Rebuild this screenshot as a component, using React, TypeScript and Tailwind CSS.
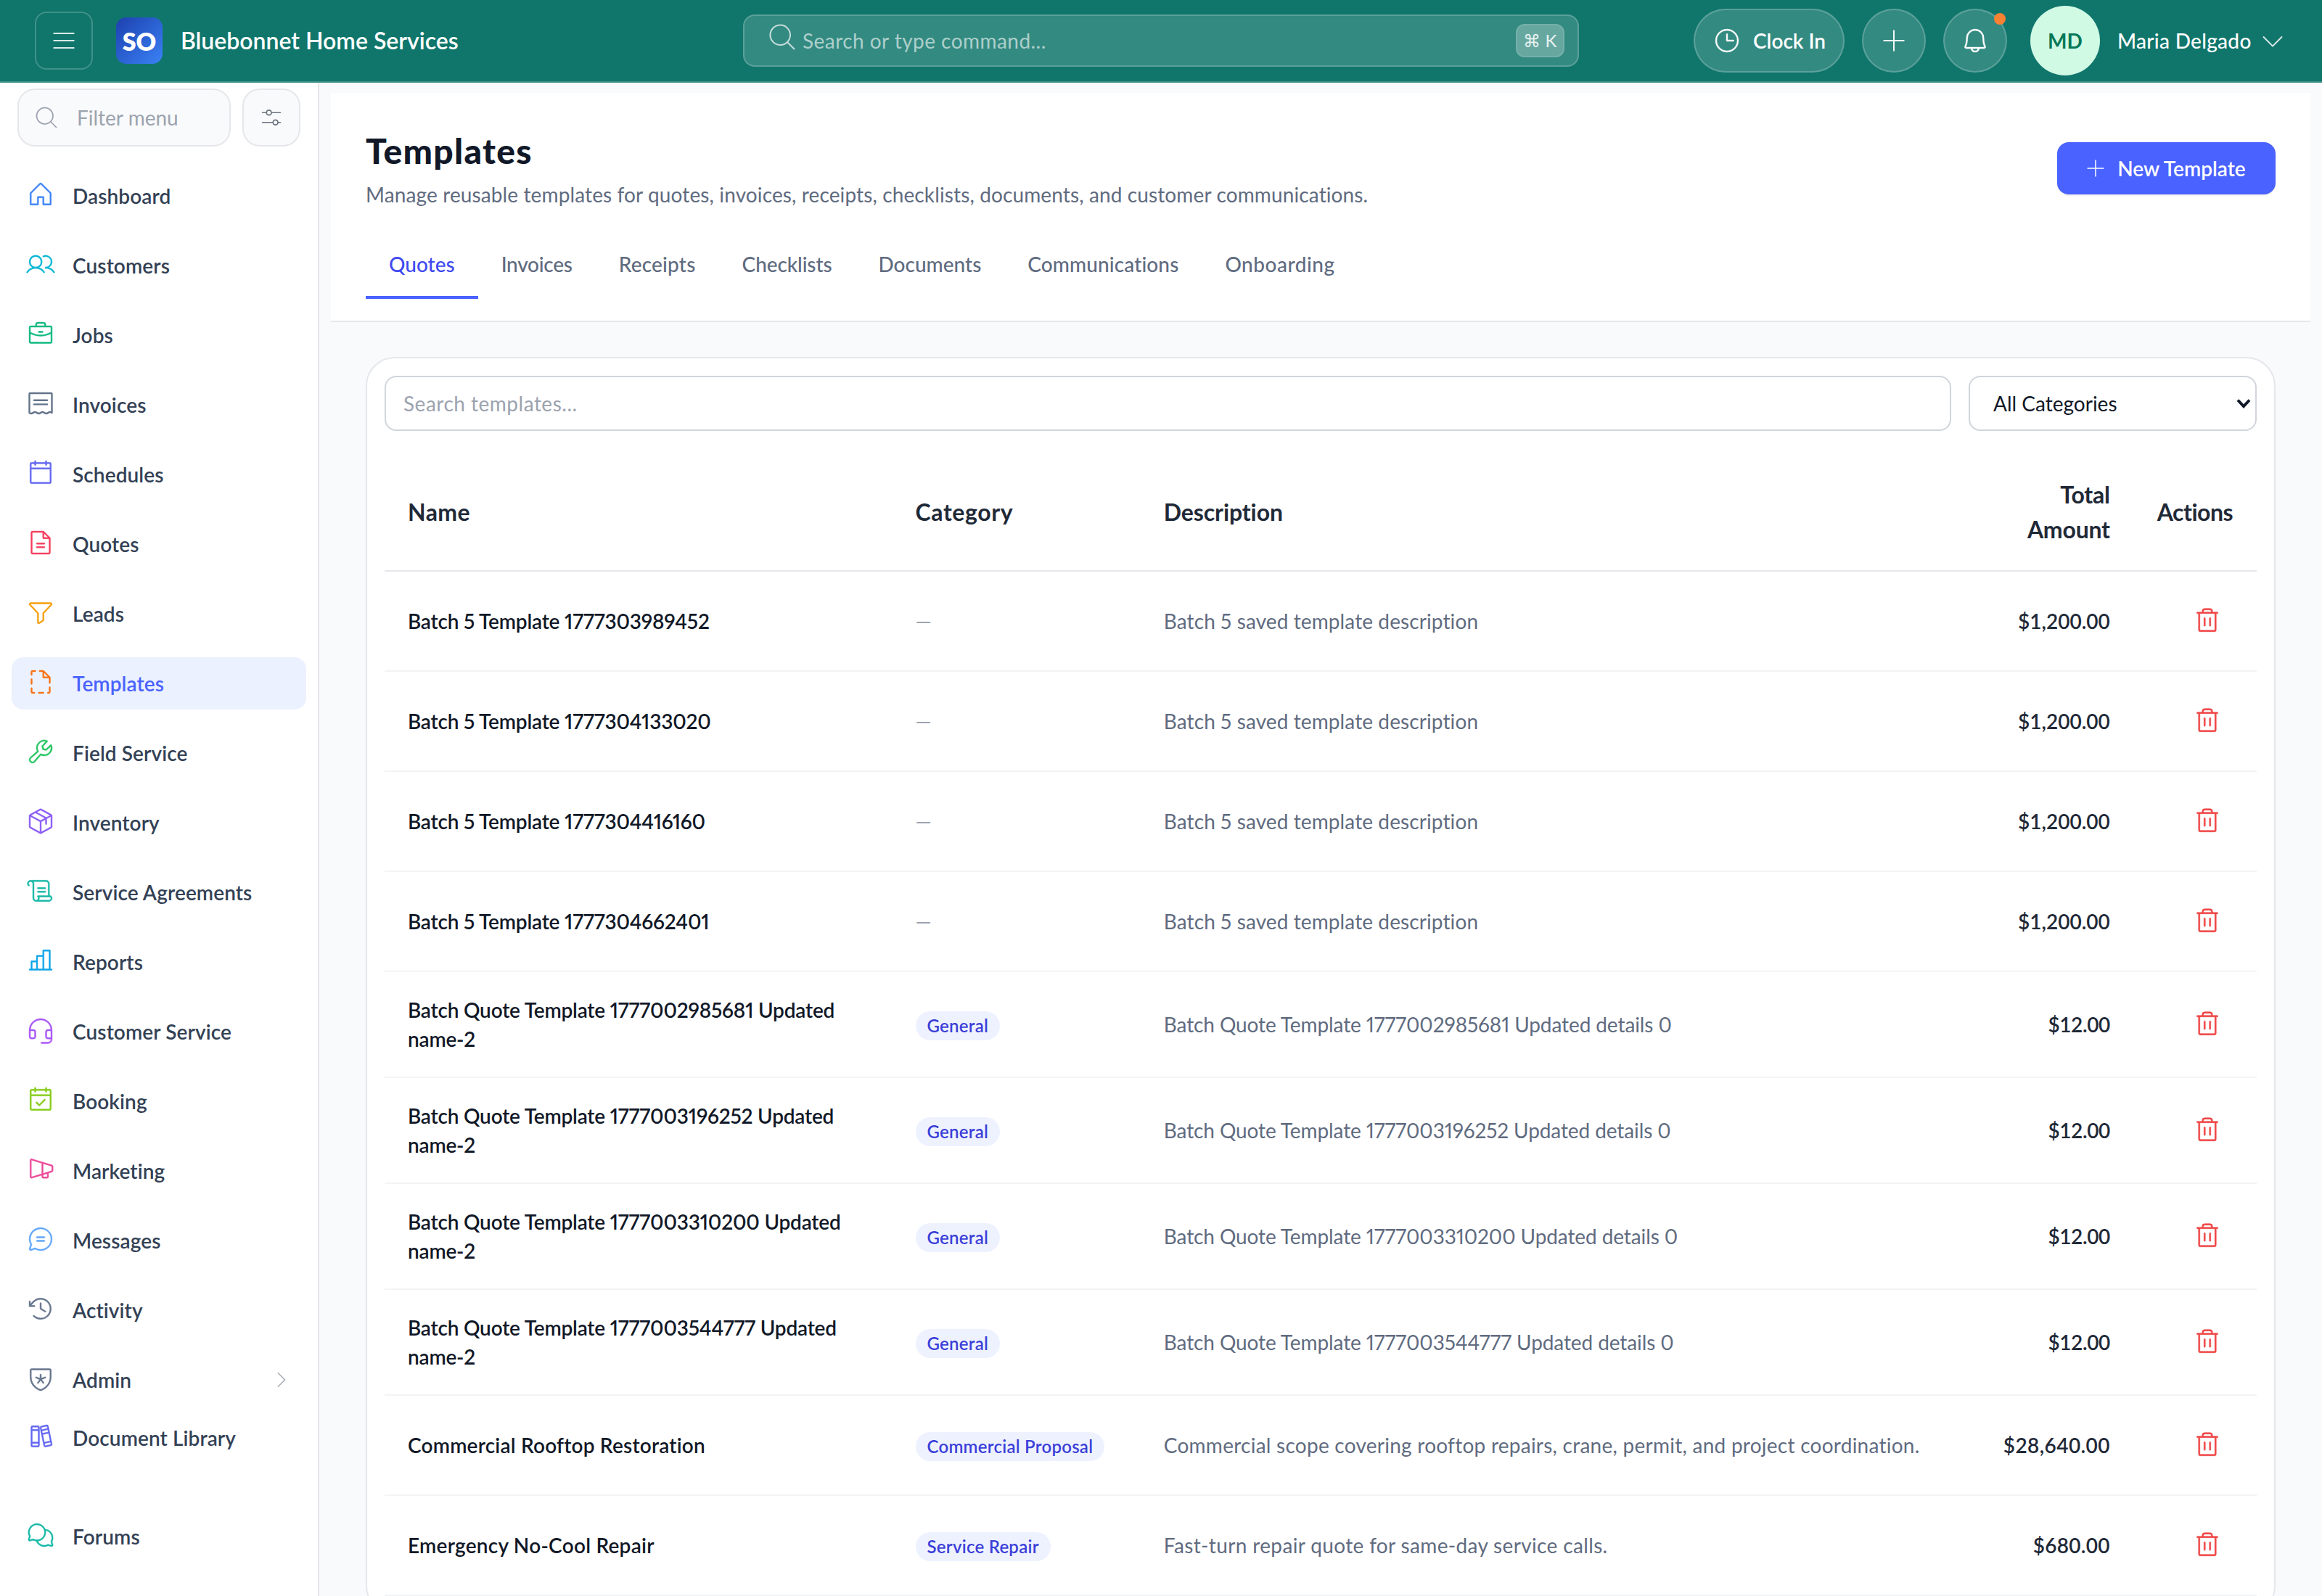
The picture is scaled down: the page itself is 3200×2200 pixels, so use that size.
import React from "react";
import {
  PiHouseLight, PiUsersLight, PiBriefcaseLight, PiCalendarBlankLight, PiFileTextLight,
  PiFunnelLight, PiFileDashedLight, PiWrenchLight, PiPackageLight, PiScrollLight, PiChartBarLight,
  PiHeadsetLight, PiCalendarCheckLight, PiMegaphoneSimpleLight, PiChatCircleTextLight,
  PiClockCounterClockwiseLight, PiShieldStarLight, PiBooksLight, PiChatsCircleLight, PiCaretRightLight,
  PiListLight, PiMagnifyingGlassLight, PiClockLight, PiPlusLight, PiBellLight, PiCaretDownLight,
  PiSlidersHorizontalLight, PiTrashLight,
} from "react-icons/pi";

function InvoiceIcon({ size = 40, className = "" }: { size?: number; strokeWidth?: number; className?: string }) {
  return (
    <svg width={size} height={size} viewBox="0 0 40 40" fill="none" stroke="currentColor" strokeWidth="2.4" strokeLinecap="round" strokeLinejoin="round" className={className}>
      <path d="M4.5 33V7a1 1 0 0 1 1-1h29a1 1 0 0 1 1 1v26q-2.6-2-5.17 0t-5.17 0t-5.17 0t-5.17 0t-5.17 0t-5.15 0z" />
      <path d="M11 15.7h18M11 21.4h18" />
    </svg>
  );
}

const nav = [
  { label: "Dashboard", Icon: PiHouseLight, color: "text-[#3b82f6]", row: "mb-6" },
  { label: "Customers", Icon: PiUsersLight, color: "text-[#06b6d4]", row: "mb-6" },
  { label: "Jobs", Icon: PiBriefcaseLight, color: "text-[#10b981]", row: "mb-6" },
  { label: "Invoices", Icon: InvoiceIcon, color: "text-[#64748b]", row: "mb-6" },
  { label: "Schedules", Icon: PiCalendarBlankLight, color: "text-[#6366f1]", row: "mb-6" },
  { label: "Quotes", Icon: PiFileTextLight, color: "text-[#f43f5e]", row: "mb-6" },
  { label: "Leads", Icon: PiFunnelLight, color: "text-[#f59e0b]", row: "mb-6" },
  { label: "Templates", Icon: PiFileDashedLight, color: "text-[#f97316]", row: "mb-6", active: true },
  { label: "Field Service", Icon: PiWrenchLight, color: "text-[#22c55e]", row: "mb-6" },
  { label: "Inventory", Icon: PiPackageLight, color: "text-[#8b5cf6]", row: "mb-6" },
  { label: "Service Agreements", Icon: PiScrollLight, color: "text-[#14b8a6]", row: "mb-6" },
  { label: "Reports", Icon: PiChartBarLight, color: "text-[#0ea5e9]", row: "mb-6" },
  { label: "Customer Service", Icon: PiHeadsetLight, color: "text-[#a855f7]", row: "mb-6" },
  { label: "Booking", Icon: PiCalendarCheckLight, color: "text-[#84cc16]", row: "mb-6" },
  { label: "Marketing", Icon: PiMegaphoneSimpleLight, color: "text-[#ec4899]", row: "mb-6" },
  { label: "Messages", Icon: PiChatCircleTextLight, color: "text-[#60a5fa]", row: "mb-6" },
  { label: "Activity", Icon: PiClockCounterClockwiseLight, color: "text-[#64748b]", row: "mb-6" },
  { label: "Admin", Icon: PiShieldStarLight, color: "text-[#64748b]", row: "mb-2", caret: true },
  { label: "Document Library", Icon: PiBooksLight, color: "text-[#6366f1]", row: "mb-16" },
  { label: "Forums", Icon: PiChatsCircleLight, color: "text-[#14b8a6]", row: "" },
];

const tabs = [
  { t: "Quotes", k: "" },
  { t: "Invoices", k: "tracking-[-0.25px]" },
  { t: "Receipts", k: "tracking-[0.2px]" },
  { t: "Checklists", k: "tracking-[-0.1px]" },
  { t: "Documents", k: "" },
  { t: "Communications", k: "tracking-[0.1px]" },
  { t: "Onboarding", k: "tracking-[0.5px]" },
];

const batch5 = "Batch 5 saved template description";
const numName = "tracking-[-0.2px]";
const numDesc = "tracking-[-0.1px]";
const b5Desc = "tracking-[0.1px]";
const rows = [
  { name: "Batch 5 Template 1777303989452", cat: "", desc: batch5, total: "$1,200.00", nk: numName, dk: b5Desc, tk: "" },
  { name: "Batch 5 Template 1777304133020", cat: "", desc: batch5, total: "$1,200.00", nk: numName, dk: b5Desc, tk: "" },
  { name: "Batch 5 Template 1777304416160", cat: "", desc: batch5, total: "$1,200.00", nk: numName, dk: b5Desc, tk: "" },
  { name: "Batch 5 Template 1777304662401", cat: "", desc: batch5, total: "$1,200.00", nk: numName, dk: b5Desc, tk: "" },
  { name: "Batch Quote Template 1777002985681 Updated name-2", cat: "General", desc: "Batch Quote Template 1777002985681 Updated details 0", total: "$12.00", nk: numName, dk: numDesc, tk: "tracking-[-0.4px]" },
  { name: "Batch Quote Template 1777003196252 Updated name-2", cat: "General", desc: "Batch Quote Template 1777003196252 Updated details 0", total: "$12.00", nk: numName, dk: numDesc, tk: "tracking-[-0.4px]" },
  { name: "Batch Quote Template 1777003310200 Updated name-2", cat: "General", desc: "Batch Quote Template 1777003310200 Updated details 0", total: "$12.00", nk: numName, dk: numDesc, tk: "tracking-[-0.4px]" },
  { name: "Batch Quote Template 1777003544777 Updated name-2", cat: "General", desc: "Batch Quote Template 1777003544777 Updated details 0", total: "$12.00", nk: numName, dk: numDesc, tk: "tracking-[-0.4px]" },
  { name: "Commercial Rooftop Restoration", cat: "Commercial Proposal", desc: "Commercial scope covering rooftop repairs, crane, permit, and project coordination.", total: "$28,640.00", nk: "tracking-[0.2px]", dk: "tracking-[0.25px]", tk: "tracking-[0.4px]" },
  { name: "Emergency No-Cool Repair", cat: "Service Repair", desc: "Fast-turn repair quote for same-day service calls.", total: "$680.00", nk: "tracking-[0.25px]", dk: "tracking-[0.35px]", tk: "tracking-[0.3px]" },
];

function RoundButton({ children, className = "" }: { children: React.ReactNode; className?: string }) {
  return (
    <button className={`relative flex h-[88px] items-center justify-center rounded-full border-2 border-white/20 bg-white/15 text-white ${className}`}>
      {children}
    </button>
  );
}

function Header() {
  return (
    <header className="flex h-[114px] shrink-0 items-center border-b-2 border-[#3f8f87] bg-[#10766c] pl-12 pr-12">
      <button className="flex h-20 w-20 items-center justify-center rounded-2xl border-2 border-white/20 text-white/85">
        <PiListLight size={40} />
      </button>
      <div className="ml-8 flex h-16 w-16 items-center justify-center rounded-[14px] bg-gradient-to-br from-[#1e40af] to-[#3b82f6] text-[34px] font-extrabold text-white">
        SO
      </div>
      <div className="ml-[25px] w-[382px] whitespace-nowrap text-[32px] font-semibold text-white">Bluebonnet Home Services</div>
      <div className="ml-[393px] flex h-[72px] w-[1152px] items-center rounded-2xl border-2 border-white/20 bg-white/15 pl-[30px] pr-[18px]">
        <PiMagnifyingGlassLight size={44} className="mb-[10px] shrink-0 text-white/70" />
        <input
          readOnly
          placeholder="Search or type command..."
          className="ml-[6px] min-w-0 flex-1 bg-transparent text-[28px] tracking-[0.45px] text-white outline-none placeholder:text-white/60"
        />
        <span className="flex h-[46px] w-[67px] items-center justify-center rounded-xl border-2 border-white/10 bg-white/25 text-[24px] text-white/85">
          ⌘ K
        </span>
      </div>
      <div className="ml-auto flex items-center">
        <RoundButton className="w-[208px] gap-4 text-[28px] font-semibold">
          <PiClockLight size={40} strokeWidth={3} />
          Clock In
        </RoundButton>
        <RoundButton className="ml-6 w-[88px]">
          <PiPlusLight size={40} />
        </RoundButton>
        <RoundButton className="ml-6 w-[88px]">
          <PiBellLight size={40} strokeWidth={3} />
          <span className="absolute right-0 top-[4px] h-4 w-4 rounded-full bg-[#fb8133]" />
        </RoundButton>
        <div className="ml-8 flex h-24 w-24 items-center justify-center rounded-full bg-[#d1fae5] text-[28px] font-bold text-[#047857]">
          MD
        </div>
        <span className="ml-6 w-[186px] whitespace-nowrap text-[28px] font-medium tracking-[0.3px] text-white">Maria Delgado</span>
        <PiCaretDownLight size={40} className="ml-2 text-white/85" />
      </div>
    </header>
  );
}

function Sidebar() {
  return (
    <aside className="h-full w-[440px] shrink-0 overflow-hidden border-r-2 border-[#e5e7eb] bg-white">
      <div className="flex gap-4 pl-6 pt-2">
        <div className="flex h-20 w-[294px] items-center rounded-3xl border-2 border-[#e5e7eb] bg-[#f9fafb] pl-5">
          <PiMagnifyingGlassLight size={36} className="shrink-0 text-[#9ca3af]" />
          <input
            readOnly
            placeholder="Filter menu"
            className="ml-6 min-w-0 flex-1 bg-transparent text-[28px] outline-none placeholder:text-[#9ca3af]"
          />
        </div>
        <button className="flex h-20 w-20 items-center justify-center rounded-3xl border-2 border-[#e5e7eb] bg-[#f9fafb] text-[#6b7280]">
          <PiSlidersHorizontalLight size={36} />
        </button>
      </div>
      <nav className="mt-8 px-4">
        {nav.map(({ label, Icon, color, row, active, caret }) => (
          <div
            key={label}
            className={`flex h-[72px] items-center gap-6 rounded-2xl pl-5 pr-5 ${row} ${active ? "bg-[#ebf1fe] text-[#4a62ff]" : "text-[#334155]"}`}
          >
            <Icon size={40} strokeWidth={3} className={`mb-1 shrink-0 ${color}`} />
            <span className="flex-1 whitespace-nowrap text-[28px] font-semibold tracking-[0.1px]">{label}</span>
            {caret && <PiCaretRightLight size={30} className="text-[#9ca3af]" />}
          </div>
        ))}
      </nav>
    </aside>
  );
}

function PageHead() {
  return (
    <section className="border-b-2 border-[#e5e7eb] bg-white px-12 pb-[30px] pt-12">
      <div className="flex items-center justify-between">
        <div>
          <h1 className="text-[48px] font-black leading-[64px] tracking-[1.3px] text-[#111827]">Templates</h1>
          <p className="mt-2 text-[28px] leading-10 tracking-[0.12px] text-[#5f6b80]">
            Manage reusable templates for quotes, invoices, receipts, checklists, documents, and customer communications.
          </p>
        </div>
        <button className="flex h-[72px] w-[301px] items-center justify-center gap-[14px] rounded-2xl bg-[#4a62ff] pr-1 text-[28px] font-semibold text-white shadow-sm">
          <PiPlusLight size={32} />
          New Template
        </button>
      </div>
      <div className="mt-8 flex">
        {tabs.map(({ t, k }, i) => (
          <div
            key={t}
            className={`border-b-4 px-8 py-6 text-[28px] font-medium leading-10 ${k} ${i === 0 ? "border-[#4a62ff] text-[#3f49f0]" : "border-transparent text-[#5f6b80]"}`}
          >
            {t}
          </div>
        ))}
      </div>
    </section>
  );
}

function Table() {
  return (
    <table className="w-full table-fixed border-collapse">
      <colgroup>
        <col className="w-[699px]" />
        <col className="w-[342px]" />
        <col className="w-[1154px]" />
        <col className="w-[213px]" />
        <col className="w-[170px]" />
      </colgroup>
      <thead>
        <tr className="border-b-2 border-[#e5e7eb] text-[32px] leading-[48px] text-[#1f2937]">
          <th className="px-8 py-8 text-left font-bold tracking-[0.4px]">Name</th>
          <th className="px-8 py-8 text-left font-bold tracking-[0.6px]">Category</th>
          <th className="px-8 py-8 text-left font-bold tracking-[-0.1px]">Description</th>
          <th className="px-8 py-8 text-right font-bold tracking-[-0.2px]">Total Amount</th>
          <th className="py-8 pl-[33px] text-left font-bold tracking-[-0.5px]">Actions</th>
        </tr>
      </thead>
      <tbody className="proportional-nums">
        {rows.map((r) => (
          <tr key={r.name} className="border-b-2 border-[#f3f4f6] text-[28px] leading-10">
            <td className={`px-8 py-8 align-middle font-semibold text-[#111827] ${r.nk}`}>{r.name}</td>
            <td className="px-8 py-8 align-middle">
              {r.cat ? (
                <span className="mt-1 inline-flex h-10 items-center rounded-full bg-[#eef2ff] px-4 text-[24px] font-semibold tracking-[0.25px] text-[#3b3fd8]">
                  {r.cat}
                </span>
              ) : (
                <span className="text-[#9ca3af]">—</span>
              )}
            </td>
            <td className={`px-8 py-8 align-middle text-[#5f6b80] ${r.dk}`}>{r.desc}</td>
            <td className={`px-8 py-8 text-right align-middle font-semibold tabular-nums text-[#1f2937] ${r.tk}`}>{r.total}</td>
            <td className="py-8 pr-8 text-right align-middle">
              <button className="inline-flex p-4 align-middle text-[#ef4444]">
                <PiTrashLight size={40} strokeWidth={4} />
              </button>
            </td>
          </tr>
        ))}
      </tbody>
    </table>
  );
}

export default function App() {
  return (
    <div className="flex h-[2200px] w-[3200px] flex-col overflow-hidden bg-[#f9fafb] font-['Lato','Noto_Sans',sans-serif]">
      <Header />
      <div className="flex min-h-0 flex-1">
        <Sidebar />
        <main className="min-w-0 flex-1 px-4 pt-[14px]">
          <PageHead />
          <div className="mx-12 mt-12 rounded-[40px] border-2 border-[#e5e7eb] bg-white p-6">
            <div className="flex gap-6">
              <input
                readOnly
                placeholder="Search templates..."
                className="h-[76px] min-w-0 flex-1 rounded-2xl border-2 border-[#d1d5db] bg-white px-6 text-[28px] tracking-[0.5px] outline-none placeholder:text-[#9ca3af]"
              />
              <div className="relative w-[397px]">
                <select className="h-[76px] w-full appearance-none rounded-2xl border-2 border-[#d1d5db] bg-white pl-8 text-[28px] text-[#111827] outline-none">
                  <option>All Categories</option>
                </select>
                <svg width="20" height="14" viewBox="0 0 20 14" fill="none" className="pointer-events-none absolute right-2 top-[31px] text-[#111827]">
                  <path d="M2 2.5l8 8.5 8-8.5" stroke="currentColor" strokeWidth="4" />
                </svg>
              </div>
            </div>
            <div className="mt-8">
              <Table />
            </div>
          </div>
        </main>
      </div>
    </div>
  );
}
